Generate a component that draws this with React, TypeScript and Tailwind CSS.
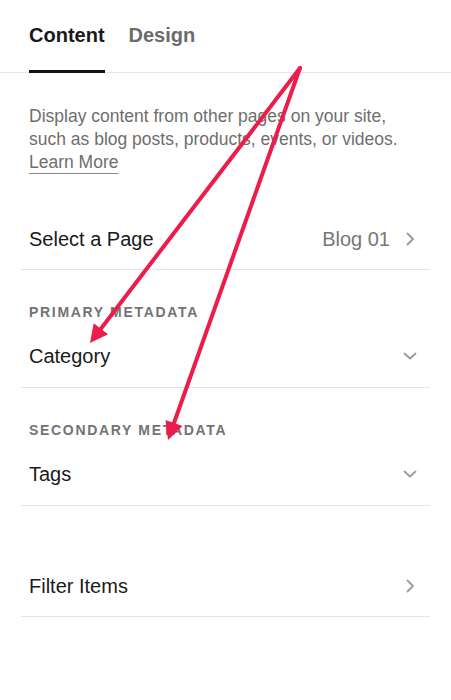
import React from 'react';

function ChevronRight() {
  return (
    <svg width="16" height="16" viewBox="0 0 16 16" fill="none" className="shrink-0">
      <path d="M5.5 2.5 L11 8 L5.5 13.5" stroke="#9a9a9a" strokeWidth="1.8" strokeLinecap="round" strokeLinejoin="round" />
    </svg>
  );
}

function ChevronDown() {
  return (
    <svg width="16" height="16" viewBox="0 0 16 16" fill="none" className="shrink-0">
      <path d="M2.5 5.5 L8 10.5 L13.5 5.5" stroke="#9a9a9a" strokeWidth="1.8" strokeLinecap="round" strokeLinejoin="round" />
    </svg>
  );
}

function Row({ label, value, icon, className = '' }: { label: string; value?: string; icon: 'right' | 'down'; className?: string }) {
  return (
    <div className={`flex items-center justify-between border-b border-[#e4e4e4] pl-2 pr-3 ${className}`}>
      <span className="text-[20px] text-[#1a1a1a]">{label}</span>
      <div className="flex items-center gap-3">
        {value && <span className="text-[20px] text-[#777777]">{value}</span>}
        {icon === 'right' ? <ChevronRight /> : <ChevronDown />}
      </div>
    </div>
  );
}

function SectionLabel({ children }: { children: React.ReactNode }) {
  return (
    <div className="pl-2 text-[14px] leading-5 font-semibold tracking-[0.12em] text-[#737373]">{children}</div>
  );
}

export default function App() {
  return (
    <div
      className="relative h-[700px] w-[451px] overflow-hidden bg-white"
      style={{ fontFamily: '"Liberation Sans", Arial, sans-serif' }}
    >
      {/* Tabs */}
      <div className="flex h-[73px] gap-6 border-b border-[#e6e6e6] px-[29px]">
        <div className="flex flex-col justify-between">
          <span className="pt-[23px] text-[20px] font-bold leading-6 text-[#1a1a1a]">Content</span>
          <div className="-mb-px h-[3px] bg-[#111111]" />
        </div>
        <span className="pt-[23px] text-[20px] font-bold leading-6 text-[#6b6b6b]">Design</span>
      </div>

      {/* Description */}
      <p className="px-[29px] pt-[32px] text-[17.5px] leading-[23px] text-[#6e6e6e]">
        Display content from other pages on your site, such as blog posts, products, events, or videos.
        <br />
        <span className="underline decoration-[#8a8a8a] decoration-1 underline-offset-[5px]">Learn More</span>
      </p>

      <div className="px-[21px] pt-[32px]">
        <Row label="Select a Page" value="Blog 01" icon="right" className="h-[64px] pt-[2px]" />

        <div className="pt-[32px]">
          <SectionLabel>PRIMARY METADATA</SectionLabel>
          <Row label="Category" icon="down" className="h-[66px] pt-[3px]" />
        </div>

        <div className="pt-[32px]">
          <SectionLabel>SECONDARY METADATA</SectionLabel>
          <Row label="Tags" icon="down" className="h-[66px] pt-[3px]" />
        </div>

        <Row label="Filter Items" icon="right" className="mt-[49px] h-[62px]" />
      </div>

      {/* Annotation arrows */}
      <svg className="pointer-events-none absolute inset-0" width="451" height="700" viewBox="0 0 451 700">
        <g stroke="#ec1c4b" strokeWidth="4" strokeLinecap="round" fill="none">
          <line x1="300" y1="68" x2="100.9" y2="328.7" />
          <line x1="300" y1="68" x2="174" y2="423" />
        </g>
        <g fill="#ec1c4b">
          <polygon points="90,343 108.1,334.2 93.7,323.2" />
          <polygon points="168,440 182.5,426 165.5,420" />
        </g>
      </svg>
    </div>
  );
}
